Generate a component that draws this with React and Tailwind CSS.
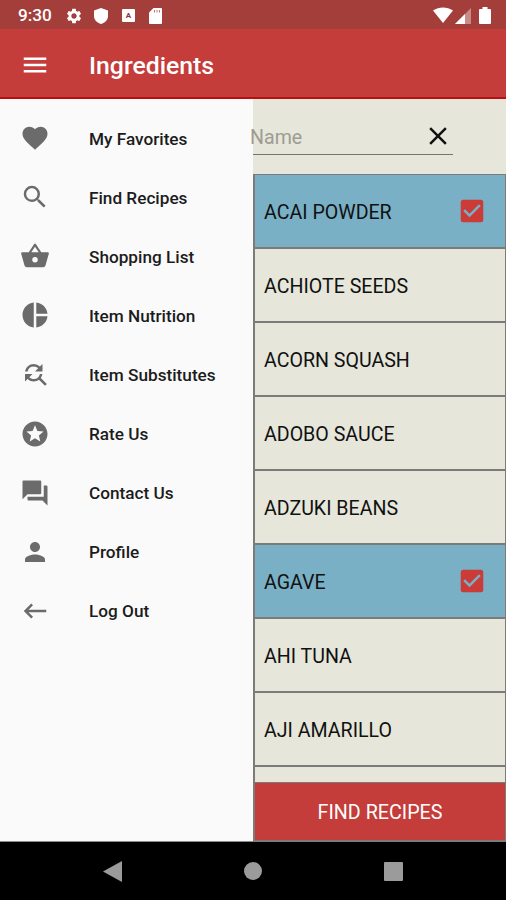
import React from "react";
import {
  MdCheckBox,
  MdClose,
  MdFavorite,
  MdFindReplace,
  MdKeyboardBackspace,
  MdMenu,
  MdPerson,
  MdPieChart,
  MdQuestionAnswer,
  MdSearch,
  MdSettings,
  MdStars,
} from "react-icons/md";

const BasketIcon = ({ className }) => (
  <svg viewBox="0 0 24 24" className={className} fill="currentColor">
    <path
      fillRule="evenodd"
      d="M17 9l-4.200-6.400a1 1 0 0 0-1.600 0L7 9H2a1 1 0 0 0-1 1.300l2.600 9.300A2 2 0 0 0 5.500 21h13a2 2 0 0 0 1.900-1.400L23 10.300A1 1 0 0 0 22 9zM9 9l3-4.500L15 9zM12 12.800a2.200 2.200 0 1 0 0 4.400a2.200 2.200 0 1 0 0-4.400z"
    />
  </svg>
);

const menuItems = [
  { label: "My Favorites", Icon: MdFavorite },
  { label: "Find Recipes", Icon: MdSearch },
  { label: "Shopping List", Icon: BasketIcon },
  { label: "Item Nutrition", Icon: MdPieChart },
  { label: "Item Substitutes", Icon: MdFindReplace },
  { label: "Rate Us", Icon: MdStars },
  { label: "Contact Us", Icon: MdQuestionAnswer },
  { label: "Profile", Icon: MdPerson },
  { label: "Log Out", Icon: MdKeyboardBackspace },
];

const ingredients = [
  { name: "ACAI POWDER", checked: true },
  { name: "ACHIOTE SEEDS" },
  { name: "ACORN SQUASH" },
  { name: "ADOBO SAUCE" },
  { name: "ADZUKI BEANS" },
  { name: "AGAVE", checked: true },
  { name: "AHI TUNA" },
  { name: "AJI AMARILLO" },
];

const StatusBar = () => (
  <div className="flex h-[29px] shrink-0 items-center bg-[#a33e3a] pt-[2px] pl-[18px] pr-[15px] text-white">
    <span className="w-[47px] pt-px text-[17.200px] font-medium leading-none">9:30</span>
    <MdSettings className="size-[18px]" />
    <svg viewBox="0 0 14 16" className="ml-[11px] h-4 w-[14px]" fill="currentColor">
      <path d="M7 0l7 2.500V8c0 4-3 6.800-7 8-4-1.200-7-4-7-8V2.500z" />
    </svg>
    <span className="ml-[14px] flex size-[13px] items-center justify-center rounded-[1px] bg-white text-[8px] font-bold leading-none text-[#8d3330]">
      A
    </span>
    <svg viewBox="0 0 13 16" className="ml-[14px] h-4 w-[13px]">
      <path fill="currentColor" d="M4.500 0H12a1 1 0 0 1 1 1v14a1 1 0 0 1-1 1H1a1 1 0 0 1-1-1V4.500z" />
      <path stroke="#a33e3a" strokeWidth="0.700" d="M5.500 2v2.500M8 2v2.500M10.500 2v2.500" />
    </svg>
    <svg viewBox="0 0 20 16" className="mb-px ml-auto h-4 w-5" fill="currentColor">
      <path d="M0 3.500C6-.5 14-.5 20 3.500L10 16z" />
    </svg>
    <svg viewBox="0 0 16 16" className="ml-[2px] h-4 w-4" fill="currentColor">
      <path d="M16 0v16H0z" opacity="0.4" />
      <path d="M10 6v10H0z" />
    </svg>
    <svg viewBox="0 0 12 17" className="ml-[8px] h-[17px] w-3" fill="currentColor">
      <path d="M3.500 0h5v2H11a1 1 0 0 1 1 1v13a1 1 0 0 1-1 1H1a1 1 0 0 1-1-1V3a1 1 0 0 1 1-1h2.500z" />
    </svg>
  </div>
);

const AppBar = () => (
  <header className="flex h-[70px] shrink-0 items-center border-b-2 border-[#b80f12] bg-[#c43d3a] pt-[4px] pl-5 text-white">
    <MdMenu className="size-[30px]" />
    <h1 className="ml-[39px] pt-[2px] text-[24.800px] font-medium leading-none">Ingredients</h1>
  </header>
);

const Drawer = () => (
  <nav className="flex w-[253px] shrink-0 flex-col border-b border-[#8b8b8b] bg-[#fafafa] pt-[9.500px]">
    {menuItems.map(({ label, Icon }) => (
      <a key={label} className="flex h-[59.100px] items-center pl-5">
        <Icon className="size-[30px] text-[#6b6b6b]" />
        <span className="ml-[39px] pt-[2.500px] text-[17.200px] font-medium leading-none text-[#1c1c1c]">
          {label}
        </span>
      </a>
    ))}
  </nav>
);

const IngredientRow = ({ name, checked }) => (
  <li
    className={
      checked
        ? "flex h-[74px] shrink-0 items-center justify-between border-b-2 border-[#7b7c7a] bg-[#79b0c6] pl-[9px] pr-[18px]"
        : "flex h-[74px] shrink-0 items-center justify-between border-b-2 border-[#7b7c7a] bg-[#e6e6da] pl-[9px] pr-[18px]"
    }
  >
    <span className="pt-[3px] text-[19.600px] leading-none text-[#111]">{name}</span>
    {checked && <MdCheckBox className="size-[30px] text-[#cb3b38]" />}
  </li>
);

const IngredientList = () => (
  <main className="flex min-w-0 flex-1 flex-col bg-[#e6e6da]">
    <div className="h-[75px] shrink-0">
      <div className="flex h-[56px] w-[200px] items-center justify-between border-b border-[#777771] pt-[19px]">
        <span className="-ml-[3px] pt-[3px] text-[19.600px] leading-none text-[#9c9c94]">Name</span>
        <MdClose className="size-[30px] text-[#111]" />
      </div>
    </div>
    <ul className="flex min-h-0 flex-1 flex-col overflow-hidden border-t border-r border-l-2 border-[#7b7c7a]">
      {ingredients.map((item) => (
        <IngredientRow key={item.name} {...item} />
      ))}
    </ul>
    <button className="h-[60px] shrink-0 border-t border-r border-b-2 border-l-2 border-[#7b7c7a] bg-[#c43d3a] pt-[2px] text-[19.700px] leading-none text-white">
      FIND RECIPES
    </button>
  </main>
);

const NavigationBar = () => (
  <footer className="flex h-[58px] shrink-0 items-center bg-black pl-[103px] text-[#9b9b9b]">
    <svg viewBox="0 0 19 21" className="h-[21px] w-[19px]" fill="currentColor">
      <path d="M19 0v21L0 10.500z" />
    </svg>
    <span className="ml-[122px] size-[18px] rounded-full bg-current" />
    <span className="ml-[122px] size-[19px] rounded-[1px] bg-current" />
  </footer>
);

const App = () => {
  return (
    <div className="flex h-[900px] w-[506px] flex-col overflow-hidden bg-black font-[Roboto,sans-serif]">
      <StatusBar />
      <AppBar />
      <div className="flex min-h-0 flex-1">
        <Drawer />
        <IngredientList />
      </div>
      <NavigationBar />
    </div>
  );
};

export default App;
